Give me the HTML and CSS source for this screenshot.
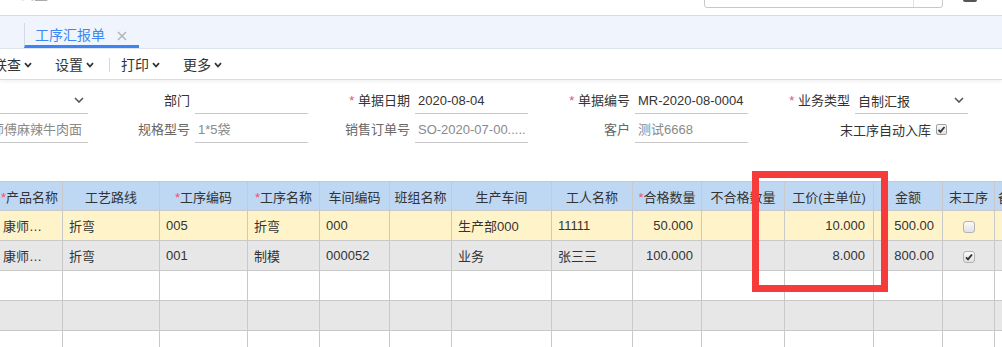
FILE: index.html
```html
<!DOCTYPE html>
<html lang="zh-CN">
<head>
    <meta charset="UTF-8">
    <meta name="viewport" content="width=device-width, initial-scale=1.0">
    <title>工序汇报单</title>
    <link rel="stylesheet" href="styles.css">
</head>
<body>
    <div class="topbar">
        <span class="app-title">云星空</span>
        <div class="search"><span class="search-btn"></span></div>
        <span class="user-icon"></span>
    </div>

    <div class="tabbar">
        <div class="tab">
            <span class="tab-name">工序汇报单</span>
            <svg class="tab-close" width="10" height="10" viewBox="0 0 10 10"><path d="M1 1 L9 9 M9 1 L1 9" stroke="#b4b4b4" stroke-width="1.5" fill="none"/></svg>
        </div>
    </div>

    <div class="toolbar">
        <span class="tool first">联查<svg width="8" height="6" viewBox="0 0 8 6"><path d="M1 1.2 L4 4.5 L7 1.2" stroke="#333" stroke-width="1.8" fill="none"/></svg></span>
        <span class="tool">设置<svg width="8" height="6" viewBox="0 0 8 6"><path d="M1 1.2 L4 4.5 L7 1.2" stroke="#333" stroke-width="1.8" fill="none"/></svg></span>
        <span class="tool-sep"></span>
        <span class="tool">打印<svg width="8" height="6" viewBox="0 0 8 6"><path d="M1 1.2 L4 4.5 L7 1.2" stroke="#333" stroke-width="1.8" fill="none"/></svg></span>
        <span class="tool">更多<svg width="8" height="6" viewBox="0 0 8 6"><path d="M1 1.2 L4 4.5 L7 1.2" stroke="#333" stroke-width="1.8" fill="none"/></svg></span>
    </div>

    <div class="form">
        <div class="form-row">
            <div class="field">
                <label>生产组织</label>
                <div class="input select"><span></span><svg width="10" height="6" viewBox="0 0 10 6"><path d="M1 1 L5 5 L9 1" stroke="#555" stroke-width="1.6" fill="none"/></svg></div>
            </div>
            <div class="field">
                <label>部门</label>
                <div class="input"></div>
            </div>
            <div class="field">
                <label><i class="req">*</i> 单据日期</label>
                <div class="input">2020-08-04</div>
            </div>
            <div class="field">
                <label><i class="req">*</i> 单据编号</label>
                <div class="input">MR-2020-08-0004</div>
            </div>
            <div class="field">
                <label><i class="req">*</i> 业务类型</label>
                <div class="input select"><span>自制汇报</span><svg width="10" height="6" viewBox="0 0 10 6"><path d="M1 1 L5 5 L9 1" stroke="#555" stroke-width="1.6" fill="none"/></svg></div>
            </div>
        </div>
        <div class="form-row">
            <div class="field disabled">
                <label>产品名称</label>
                <div class="input">康师傅麻辣牛肉面</div>
            </div>
            <div class="field disabled">
                <label>规格型号</label>
                <div class="input">1*5袋</div>
            </div>
            <div class="field disabled">
                <label>销售订单号</label>
                <div class="input">SO-2020-07-00.....</div>
            </div>
            <div class="field disabled">
                <label>客户</label>
                <div class="input">测试6668</div>
            </div>
            <div class="field field-check">
                <span>末工序自动入库</span>
                <span class="check small on"><svg width="9" height="9" viewBox="0 0 9 9"><path d="M1.5 4.8 L3.5 6.8 L7.5 2" stroke="#333" stroke-width="1.8" fill="none"/></svg></span>
            </div>
        </div>
    </div>

    <div class="grid-wrap">
        <table class="grid">
            <colgroup>
                <col style="width:66px"><col style="width:97px"><col style="width:88px"><col style="width:72px">
                <col style="width:70px"><col style="width:62px"><col style="width:100px"><col style="width:81px">
                <col style="width:69px"><col style="width:83px"><col style="width:89px"><col style="width:69px">
                <col style="width:52px"><col style="width:60px">
            </colgroup>
            <thead>
                <tr>
                    <th><i class="req">*</i>产品名称</th>
                    <th>工艺路线</th>
                    <th><i class="req">*</i>工序编码</th>
                    <th><i class="req">*</i>工序名称</th>
                    <th>车间编码</th>
                    <th>班组名称</th>
                    <th>生产车间</th>
                    <th>工人名称</th>
                    <th><i class="req">*</i>合格数量</th>
                    <th>不合格数量</th>
                    <th>工价(主单位)</th>
                    <th>金额</th>
                    <th>末工序</th>
                    <th class="cut">备注</th>
                </tr>
            </thead>
            <tbody>
                <tr class="current">
                    <td>康师…</td><td>折弯</td><td>005</td><td>折弯</td><td>000</td><td></td>
                    <td>生产部000</td><td>11111</td><td class="num">50.000</td><td></td>
                    <td class="num">10.000</td><td class="num">500.00</td>
                    <td class="center"><span class="check"></span></td><td></td>
                </tr>
                <tr class="odd">
                    <td>康师…</td><td>折弯</td><td>001</td><td>制模</td><td>000052</td><td></td>
                    <td>业务</td><td>张三三</td><td class="num">100.000</td><td></td>
                    <td class="num">8.000</td><td class="num">800.00</td>
                    <td class="center"><span class="check on"><svg width="10" height="10" viewBox="0 0 10 10"><path d="M2 5.3 L4 7.3 L8 2.5" stroke="#333" stroke-width="1.9" fill="none"/></svg></span></td><td></td>
                </tr>
                <tr><td></td><td></td><td></td><td></td><td></td><td></td><td></td><td></td><td></td><td></td><td></td><td></td><td></td><td></td></tr>
                <tr class="odd"><td></td><td></td><td></td><td></td><td></td><td></td><td></td><td></td><td></td><td></td><td></td><td></td><td></td><td></td></tr>
                <tr><td></td><td></td><td></td><td></td><td></td><td></td><td></td><td></td><td></td><td></td><td></td><td></td><td></td><td></td></tr>
            </tbody>
        </table>
    </div>

    <div class="mark"></div>
</body>
</html>
```

FILE: styles.css
```css
body {
    margin: 0;
    width: 1002px;
    height: 347px;
    overflow: hidden;
    position: relative;
    font-family: "Liberation Sans", "Noto Sans CJK SC", sans-serif;
    font-size: 13px;
    color: #333;
    background: #fff;
}
i.req {
    font-style: normal;
    color: #f0506e;
}

/* top bar */
.topbar {
    height: 15px;
    border-bottom: 1px solid #dadada;
    display: flex;
    align-items: flex-start;
}
.app-title {
    margin: -13px 0 0 20px;
    font-size: 14px;
    line-height: 14px;
    color: #aaa;
}
.search {
    margin-left: auto;
    margin-top: -13px;
    width: 237px;
    height: 19px;
    border: 1px solid #c8c8c8;
    border-radius: 3px;
    display: flex;
    justify-content: flex-end;
}
.search-btn {
    width: 28px;
    border-left: 1px solid #e2e2e2;
}
.user-icon {
    margin: -12px 25px 0 20px;
    width: 14px;
    height: 14px;
    background: #555;
    border-radius: 2px;
}

/* tabs */
.tabbar {
    height: 32px;
    background: #eff4fd;
    border-bottom: 1px solid #dde3ec;
    display: flex;
    align-items: flex-end;
}
.tab {
    margin-left: 24px;
    height: 22px;
    padding: 0 12px 0 10px;
    border-left: 1px solid #d5dbe4;
    border-bottom: 3px solid #3d84f2;
    display: flex;
    align-items: center;
    gap: 12px;
}
.tab-name {
    font-size: 14px;
    color: #3f86f0;
    line-height: 20px;
    padding-top: 2px;
}
.tab-close {
    margin-top: 3px;
}

/* toolbar */
.toolbar {
    height: 30px;
    border-bottom: 1px solid #dcdcdc;
    box-shadow: 0 2px 3px rgba(0, 0, 0, 0.05);
    display: flex;
    align-items: center;
    font-size: 14px;
}
.tool {
    display: flex;
    align-items: center;
    gap: 3px;
    margin-right: 23px;
}
.tool.first {
    margin-left: -7px;
}
.tool svg {
    margin-top: 1px;
}
.tool-sep {
    width: 1px;
    height: 14px;
    background: #d8d8d8;
    margin: 1px 11px 0 -8px;
}

/* form */
.form {
    padding-top: 8px;
}
.form-row {
    display: flex;
    margin-left: -132px;
}
.form-row + .form-row {
    margin-top: 3px;
}
.field {
    flex: none;
    width: 220px;
    display: flex;
}
.field label {
    width: 107px;
    padding-right: 5px;
    box-sizing: border-box;
    text-align: right;
    line-height: 25px;
    white-space: nowrap;
}
.input {
    width: 113px;
    height: 26px;
    line-height: 25px;
    padding-left: 3px;
    box-sizing: border-box;
    border-bottom: 1px solid #c8c8c8;
    overflow: hidden;
    white-space: nowrap;
}
.input.select {
    display: flex;
    align-items: center;
    justify-content: space-between;
    padding-right: 4px;
}
.input.select span {
    padding-top: 2px;
}
.input.select svg {
    margin-top: -1px;
}
.field.disabled label {
    color: #666;
}
.field.disabled .input {
    color: #8a8a8a;
}
.field-check {
    justify-content: flex-end;
    align-items: center;
    gap: 5px;
    padding-right: 21px;
    box-sizing: border-box;
    height: 25px;
}

/* checkboxes */
.check {
    display: inline-flex;
    align-items: center;
    justify-content: center;
    width: 12px;
    height: 12px;
    border: 1px solid #b3b3b3;
    border-radius: 3px;
    background: linear-gradient(#fafafa, #e2e2e2);
    box-sizing: border-box;
    vertical-align: middle;
}
.check.small {
    width: 11px;
    height: 11px;
    border-color: #a0a0a0;
    border-radius: 2px;
}

/* grid */
.grid-wrap {
    margin-top: 38px;
}
.grid {
    width: 1058px;
    margin-left: -4px;
    border-collapse: collapse;
    table-layout: fixed;
}
.grid th,
.grid td {
    border: 1px solid #c9c9c9;
    padding: 0 6px;
    white-space: nowrap;
    overflow: hidden;
}
.grid th {
    height: 28px;
    background: #bed8f3;
    font-weight: normal;
    text-align: center;
    padding: 0;
}
.grid th.cut {
    text-align: left;
    padding-left: 3px;
}
.grid td {
    height: 29px;
}
.grid td.num {
    text-align: right;
    padding-right: 8px;
}
.grid td.center {
    text-align: center;
    padding: 0;
}
.grid tr.current td {
    background: #fff4c9;
}
.grid tr.odd td {
    background: #e7e7e7;
}

/* annotation */
.mark {
    position: absolute;
    left: 752px;
    top: 171px;
    width: 136px;
    height: 121px;
    border: 7px solid #f73a3a;
    box-sizing: border-box;
}
```
